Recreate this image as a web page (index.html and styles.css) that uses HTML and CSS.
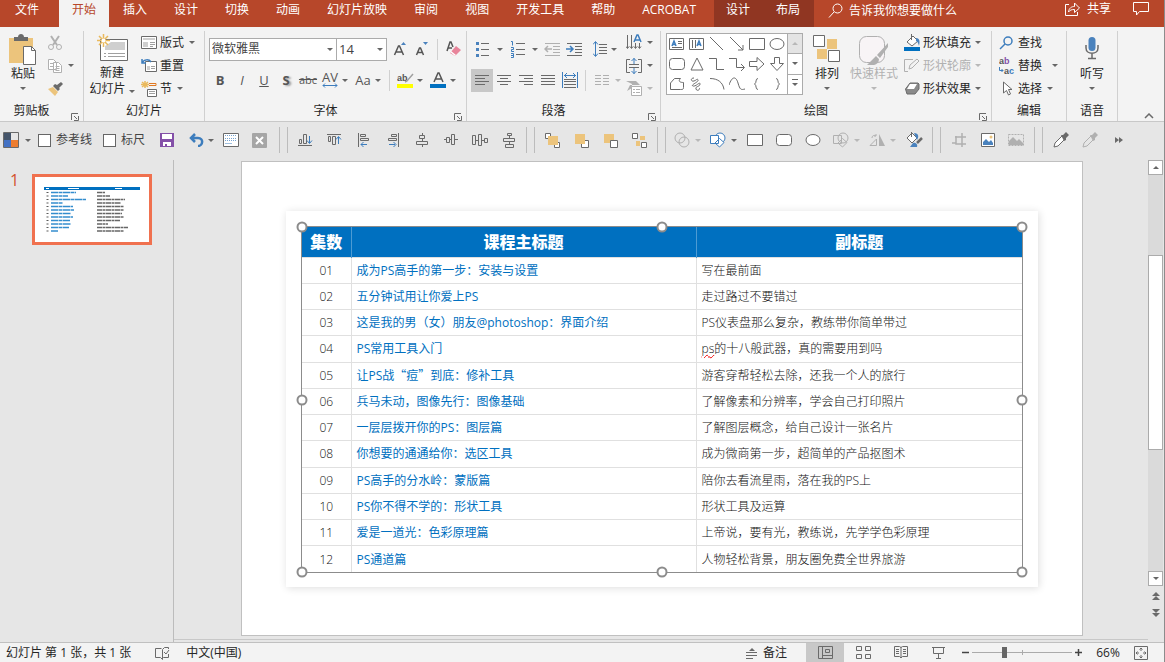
FILE: index.html
```html
<!DOCTYPE html>
<html lang="zh-CN">
<head>
  <meta charset="UTF-8" />
  <meta name="viewport" content="width=device-width, initial-scale=1.0" />
  <title>演示文稿</title>
  <link rel="stylesheet" href="styles.css">
</head>
<body>
  <header class="tabs">
    <button class="tab file">文件</button>
    <button class="tab active">开始</button>
    <button class="tab">插入</button>
    <button class="tab">设计</button>
    <button class="tab">切换</button>
    <button class="tab">动画</button>
    <button class="tab">幻灯片放映</button>
    <button class="tab">审阅</button>
    <button class="tab">视图</button>
    <button class="tab">开发工具</button>
    <button class="tab">帮助</button>
    <button class="tab">ACROBAT</button>
    <div class="context">
      <button class="tab">设计</button>
      <button class="tab">布局</button>
    </div>
    <button class="tell">
      <svg width="15" height="16"><circle cx="9.500" cy="5.500" r="4.500"/><path d="M6 9L1 14.500"/></svg>
      告诉我你想要做什么
    </button>
    <button class="share">
      <svg width="17" height="15"><path d="M5 3.500H1.500v11h12V11M4.500 11c.5-4 3-5.500 6-5.500V2l5 5-5 4.500V8.500c-3 0-4.500.5-6 2.500z"/></svg>
      共享
    </button>
    <button class="comment" aria-label="批注">
      <svg width="18" height="15"><path d="M1.500 1.500h15v9h-9l-3 3.500v-3.500h-3z"/></svg>
    </button>
  </header>

  <div class="ribbon">
    <section class="group">
      <div class="body">
        <button class="big paste">
          <svg width="30" height="32"><path class="gold" d="M1 4h24v25H1z"/><path class="dark" d="M6 3h4c0-4 6-4 6 0h4v4H6z"/><path class="white" d="M15.500 12.500h8l4 4v14h-12z"/><path d="M23.500 12.500v4h4"/></svg>
          <span>粘贴</span>
          <i class="caret"></i>
        </button>
        <div class="stack">
          <button class="small" aria-label="剪切"><svg width="16" height="16" class="pale"><path stroke-width="2" d="M4 1l6 9M12 1L6 10"/><circle cx="4" cy="12" r="2.500"/><circle cx="12" cy="12" r="2.500"/></svg></button>
          <button class="small" aria-label="复制"><svg width="16" height="16" class="pale"><path class="white" d="M1.500 1.500h5l3 3v7h-8zM6.500 4.500h5l3 3v7h-8z"/><path d="M3 5.500h3M3 8.500h3M8.500 8.500h4M8.500 10.500h4M8.500 12.500h4"/></svg><i class="caret"></i></button>
          <button class="small" aria-label="格式刷"><svg width="17" height="16"><path class="gold" d="M1 8l5-2 5 5-3 4z"/><path class="dark" d="M6 5l5 5 2-2-1-1 4-4-2-2-4 3-2-1z"/></svg></button>
        </div>
      </div>
      <h2>剪贴板</h2>
      <button class="launch" aria-label="剪贴板选项"><svg width="8" height="8"><path d="M.5 7V.5H7M3 3l3 3M7.500 3v4.500H3"/></svg></button>
    </section>

    <section class="group">
      <div class="body">
        <button class="big new">
          <svg width="31" height="30"><path class="white" d="M3.500 5.500h27v21h-27z"/><path class="light" d="M14 8h14v8H8v-4z"/><path class="soft" d="M7 19.500h2M11 19.500h17M7 22.500h2M11 22.500h17"/><path class="sun" d="M6.500 0v13M0 6.500h13M2 2l9 9M11 2l-9 9"/><circle cx="6.500" cy="6.500" r="2" class="white plain"/></svg>
          <span>新建</span>
          <span>幻灯片 <i class="caret"></i></span>
        </button>
        <div class="stack">
          <button class="small"><svg width="16" height="15"><path class="white" d="M.5 1.500h15v12H.5z"/><path class="light" d="M2 3h12v2H2zM2 7h5v5H2z"/><path class="soft" d="M9 7.500h5M9 9.500h5M9 11.500h3"/></svg>版式<i class="caret"></i></button>
          <button class="small"><svg width="16" height="15"><path class="white" d="M4.500 3.500h11v10h-11z"/><path class="light" d="M6 8h3v4H6z"/><path class="soft" d="M10 8.500h4M10 10.500h4"/><path class="blue thick" d="M1 1v4h4M1 5c2-4 7-4 9-1"/></svg>重置</button>
          <button class="small"><svg width="16" height="16"><path class="sun" d="M4 0v7M0 3.500h8M1 1l6 5M7 1L1 6"/><path class="orange" d="M8 4.500h7v-2H8"/><path class="white" d="M6.500 8.500h9v7h-9z"/><path class="soft" d="M8 10.500h6M8 12.500h6"/></svg>节<i class="caret"></i></button>
        </div>
      </div>
      <h2>幻灯片</h2>
    </section>

    <section class="group">
      <div class="lines">
        <div class="line">
          <label class="combo name"><select aria-label="字体"><option>微软雅黑</option></select><i class="caret"></i></label>
          <label class="combo size"><select aria-label="字号"><option>14</option></select><i class="caret"></i></label>
          <button class="key grow" aria-label="增大字号"><svg width="14" height="14"><path class="letter" d="M1.500 13L5.500 4h1l4 9M3 10h6"/><path class="bluefill" d="M8 3l2.500-3L13 3z"/></svg></button>
          <button class="key" aria-label="减小字号"><svg width="14" height="14"><path class="letter" d="M1.500 13L4.500 6h1l3 7M2.500 10.500h5"/><path class="bluefill" d="M8 0h5l-2.500 3z"/></svg></button>
          <span class="rule"></span>
          <button class="key" aria-label="清除格式"><svg width="17" height="17"><path class="letter" d="M2 10L5 1h1l2 5M3 7h4"/><path class="pink" d="M5 12l6-7 5 4-6 6z"/><path class="white plain" d="M6 10l5 4-1 1-5-4z"/></svg></button>
        </div>
        <div class="line text">
          <button class="key"><b>B</b></button>
          <button class="key"><em>I</em></button>
          <button class="key"><u>U</u></button>
          <button class="key"><b class="shade">S</b></button>
          <button class="key strike"><s>abc</s></button>
          <button class="key spacing" aria-label="字符间距"><span>AV</span><svg width="16" height="5"><path class="blue" d="M1 2.500h14M3 .5l-2 2 2 2M13 .5l2 2-2 2"/></svg></button><i class="caret"></i>
          <button class="key case">Aa</button><i class="caret"></i>
          <span class="rule"></span>
          <button class="key" aria-label="文本突出显示颜色"><svg width="17" height="18"><text x="0" y="10">ab</text><path class="soft thick" d="M16 3l-6 7-2 1"/><path class="yellow" d="M0 13h16v4H0z"/></svg></button><i class="caret"></i>
          <button class="key" aria-label="字体颜色"><svg width="17" height="18"><path class="letter" d="M4 11l4-9h1l4 9M5.500 8h6"/><path class="ink" d="M0 13h16v4H0z"/></svg></button><i class="caret"></i>
        </div>
      </div>
      <h2>字体</h2>
      <button class="launch" aria-label="字体选项"><svg width="8" height="8"><path d="M.5 7V.5H7M3 3l3 3M7.500 3v4.500H3"/></svg></button>
    </section>

    <section class="group">
      <div class="body">
        <div class="lines para">
          <div class="line">
            <button class="pair" aria-label="项目符号"><svg width="16" height="16"><path d="M6 2.500h8M6 8.500h8M6 14.500h8"/><path class="bluefill" d="M1 1h3v3H1zM1 7h3v3H1zM1 13h3v3H1z"/></svg><i class="caret"></i></button>
            <button class="pair" aria-label="编号"><svg width="16" height="18"><path d="M6 3.500h9M6 9.500h9M6 14.500h9"/><path class="blue" d="M1 1.500h1.500v4M1 7.500h2.500v2H1.500v2h2.500M1 13.500h2.500v4H1M1 15.500h2"/></svg><i class="caret"></i></button>
            <button class="key" aria-label="减少缩进"><svg width="17" height="14" class="pale"><path d="M1 1.500h15M9 4.500h7M9 7.500h7M9 10.500h7M1 13.500h15"/><path class="thick" d="M8 7H1M4 4L1 7l3 3"/></svg></button>
            <button class="key" aria-label="增加缩进"><svg width="17" height="14"><path d="M1 1.500h15M9 4.500h7M9 7.500h7M9 10.500h7M1 13.500h15"/><path class="blue thick" d="M0 7h7M4 4l3 3-3 3"/></svg></button>
            <button class="pair gapped" aria-label="行距"><svg width="15" height="16"><path d="M6 3.500h8M6 6.500h8M6 9.500h8M6 12.500h8"/><path class="blue" d="M2.500 1v14M0 3.500l2.500-3 2.500 3M0 12.500l2.500 3 2.500-3"/></svg><i class="caret"></i></button>
          </div>
          <div class="line">
            <button class="key on" aria-label="左对齐"><svg width="15" height="12"><path d="M0 1.500h14M0 4.500h10M0 7.500h14M0 10.500h10"/></svg></button>
            <button class="key" aria-label="居中"><svg width="15" height="12"><path d="M0 1.500h14M3 4.500h8M0 7.500h14M3 10.500h8"/></svg></button>
            <button class="key" aria-label="右对齐"><svg width="15" height="12"><path d="M0 1.500h14M5 4.500h9M0 7.500h14M5 10.500h9"/></svg></button>
            <button class="key" aria-label="两端对齐"><svg width="15" height="12"><path d="M0 1.500h14M0 4.500h14M0 7.500h14M0 10.500h14"/></svg></button>
            <button class="key" aria-label="分散对齐"><svg width="17" height="16"><path d="M2 7.500h12M2 9.500h12M2 12.500h12M2 15.500h12"/><path class="blue" d="M.5 0v16M15.500 0v16M2 3.500h12M5 1L2.500 3.500 5 6M11 1l2.500 2.500L11 6"/></svg></button>
            <span class="rule"></span>
            <button class="pair" aria-label="分栏"><svg width="14" height="12" class="pale"><path d="M0 1.500h6M0 4.500h6M0 7.500h6M0 10.500h6M8 1.500h6M8 4.500h6M8 7.500h6M8 10.500h6"/></svg><i class="caret off"></i></button>
          </div>
        </div>
        <div class="stack">
          <button class="small" aria-label="文字方向"><svg width="16" height="17"><path d="M1.500 1v13M5.500 1v13M9.500 9v5M13.500 9v5M0 12.500l1.500 2 1.500-2M4 12.500l1.500 2 1.500-2M8 12.500l1.500 2 1.500-2M12 12.500l1.500 2 1.500-2"/><path class="blue thick" d="M8 8l3-7h1l3 7M9 6h5"/></svg><i class="caret"></i></button>
          <button class="small" aria-label="对齐文本"><svg width="16" height="16"><path d="M4 1.500H.5v13H4M12 1.500h3.500v13H12M3 6.500h10M3 9.500h10"/><path class="blue" d="M8 0v6M8 10v6M5.500 3L8 .5 10.500 3M5.500 13L8 15.500l2.500-2.500"/></svg><i class="caret"></i></button>
          <button class="small" aria-label="转换为 SmartArt"><svg width="16" height="17" class="pale"><path class="greyfill" d="M0 1h10l4 4H4zM0 1l4 4-3 6 5-3V4z"/><path class="white" d="M5.500 6.500h10v9h-10z"/><path d="M7 9.500h2M10 9.500h4M7 12.500h2M10 12.500h4"/></svg><i class="caret off"></i></button>
        </div>
      </div>
      <h2>段落</h2>
      <button class="launch" aria-label="段落选项"><svg width="8" height="8"><path d="M.5 7V.5H7M3 3l3 3M7.500 3v4.500H3"/></svg></button>
    </section>

    <section class="group">
      <div class="body draw">
        <div class="gallery">
          <div class="shapes">
            <button aria-label="文本框"><svg width="16" height="14"><path d="M.5 1.500h14v11H.5zM9 4.500h4M9 6.500h4M3 10.500h10"/><path class="blue thick" d="M3 9l2-5 2 5M4 7.500h3"/></svg></button>
            <button aria-label="竖排文本框"><svg width="16" height="14"><path d="M.5 1.500h14v11H.5zM3.500 3v8M6.500 3v8"/><path class="blue thick" d="M8 9l2-5 2 5M9 7.500h3"/></svg></button>
            <button aria-label="直线"><svg width="16" height="14"><path d="M1 0l13 13"/></svg></button>
            <button aria-label="箭头"><svg width="16" height="14"><path d="M1 0l13 13M14 8v5H9"/></svg></button>
            <button aria-label="矩形"><svg width="16" height="14"><path d="M.5 1.500h15v11H.5z"/></svg></button>
            <button aria-label="椭圆"><svg width="16" height="14"><ellipse cx="8" cy="7" rx="7" ry="5.500"/></svg></button>
            <button aria-label="圆角矩形"><svg width="16" height="14"><rect x=".5" y="1.500" width="15" height="11" rx="3"/></svg></button>
            <button aria-label="三角形"><svg width="16" height="14"><path d="M8 1l6 12H2z"/></svg></button>
            <button aria-label="肘形连接符"><svg width="16" height="14"><path d="M0 1.500h7.500v11H15"/></svg></button>
            <button aria-label="肘形箭头"><svg width="16" height="14"><path d="M0 1.500h7.500v9H15M12 7l3.500 3.500L12 14"/></svg></button>
            <button aria-label="右箭头"><svg width="16" height="14"><path d="M.5 4.500H8V.5L15 7l-7 6.500v-4H.5z"/></svg></button>
            <button aria-label="下箭头"><svg width="16" height="14"><path d="M5.500.5v6h-4L8 13.500l6.500-7h-4v-6z"/></svg></button>
            <button aria-label="任意多边形"><svg width="16" height="14"><path d="M1.500 12.500V6l4-4.500h6c-3 3 0 4 3 4v5c0 2-1 2-3 2z"/></svg></button>
            <button aria-label="自由曲线"><svg width="16" height="14"><path d="M5 1C1 1 2 5 5 4s3-3 4-1-8 5-5 6 7-5 7-2-5 2-4 5 5 0 3-1"/></svg></button>
            <button aria-label="弧形"><svg width="16" height="14"><path d="M1 1.500c8 0 13 4 14 11"/></svg></button>
            <button aria-label="曲线"><svg width="16" height="14"><path d="M0 8c3-9 7-9 9-2s3 7 7 6"/></svg></button>
            <button aria-label="左大括号"><svg width="16" height="14"><path d="M9 1.500C6 1.500 8 6 5.500 7 8 8 6 12.500 9 12.500"/></svg></button>
            <button aria-label="右大括号"><svg width="16" height="14"><path d="M7 1.500c3 0 1 4.500 3.500 5.500C8 8 10 12.500 7 12.500"/></svg></button>
          </div>
          <div class="steps">
            <button class="dim" aria-label="上一行"><i class="caret up off"></i></button>
            <button aria-label="下一行"><i class="caret"></i></button>
            <button aria-label="其他"><i class="caret more"></i></button>
          </div>
        </div>
        <button class="big arrange">
          <svg width="28" height="28"><path class="gold" d="M14 4h10v10H14zM4 14h10v10H4z"/><path class="white" d="M.5.5h11v11H.5zM15.500 15.500h11v11h-11z"/></svg>
          <span>排列</span>
          <i class="caret"></i>
        </button>
        <button class="big style" disabled>
          <svg width="32" height="30" class="pale"><rect fill="#f8f4f6" x="1.500" y="1.500" width="25" height="26" rx="7"/><path class="greyfill" d="M30 8L19 20l3 3 8-11zM18 21l-9 9c6 1 12 0 12-6z"/></svg>
          <span>快速样式</span>
          <i class="caret off"></i>
        </button>
        <div class="stack">
          <button class="small"><svg width="16" height="17"><path class="white" d="M3 8l6-6 5 5-6 5z"/><path d="M7.500 0v6"/><path class="bluefill" d="M12 4c4 0 4 4 3 8-1-3-1-4-3-5z"/><path class="ink" d="M0 13h16v4H0z"/></svg>形状填充<i class="caret"></i></button>
          <button class="small" disabled><svg width="16" height="15" class="pale"><path d="M9 1.500H.5v12H4M5 11l1-4 7-6 2 2-7 7z"/></svg>形状轮廓<i class="caret off"></i></button>
          <button class="small"><svg width="16" height="15"><path stroke-linejoin="round" d="M1.500 8L6 2h8l1 1v5l-4 5H3z" fill="#8a8a8a"/><path class="white plain" d="M6 3h7l-3 5H3z"/></svg>形状效果<i class="caret"></i></button>
        </div>
      </div>
      <h2>绘图</h2>
      <button class="launch" aria-label="绘图选项"><svg width="8" height="8"><path d="M.5 7V.5H7M3 3l3 3M7.500 3v4.500H3"/></svg></button>
    </section>

    <section class="group">
      <div class="body edit">
        <div class="stack">
          <button class="small"><svg width="16" height="14"><circle class="blue thick" cx="9" cy="5" r="4"/><path class="blue thick" d="M6 8l-5 5"/></svg>查找</button>
          <button class="small"><svg width="16" height="22"><text x="0" y="9">a<tspan class="violet">b</tspan></text><text x="5" y="19">a<tspan class="azure">c</tspan></text><path class="blue" d="M.5 12v3.500H4M2.500 14L4 15.500 2.500 17"/></svg>替换<i class="caret far"></i></button>
          <button class="small"><svg width="16" height="15"><path class="white" d="M4.500 1v11l3-2.500 2 4.500 2-1-2-4.500h3.500z"/></svg>选择<i class="caret"></i></button>
        </div>
      </div>
      <h2>编辑</h2>
    </section>

    <section class="group">
      <div class="body voice">
        <button class="big">
          <svg width="14" height="24"><rect class="bluefill" x="3.500" y="1" width="7" height="14" rx="3.500"/><path class="thick" d="M1 9v3c0 7 12 7 12 0V9M7 17v5M3 22.500h8"/></svg>
          <span>听写</span>
          <i class="caret"></i>
        </button>
      </div>
      <h2>语音</h2>
    </section>
    <button class="collapse" aria-label="折叠功能区"><svg width="10" height="6"><path class="thick" d="M1 5l4-4 4 4"/></svg></button>
  </div>

  <nav class="quick">
    <button class="swatch" aria-label="主题颜色"><svg width="16" height="16"><path fill="#44546a" stroke="none" d="M1 1h7v7H1z"/><path fill="#e7e6e6" stroke="none" d="M8 1h7v7H8z"/><path fill="#4472c4" stroke="none" d="M1 8h7v7H1z"/><path fill="#ed7d31" stroke="none" d="M8 8h7v7H8z"/><path d="M.5.5h15v15H.5z"/></svg><i class="caret"></i></button>
    <label><input type="checkbox">参考线</label>
    <label><input type="checkbox">标尺</label>
    <div class="starter">
      <button aria-label="保存"><svg width="14" height="14"><path fill="#8450a8" stroke="none" d="M0 0h14v14H0z"/><path fill="#fff" stroke="none" d="M2 1h10v5H2zM3 9h8v4H3z"/><path fill="#8450a8" stroke="none" d="M5 11h2v2H5z"/></svg></button>
      <button class="undo" aria-label="撤消"><svg width="15" height="14"><path class="blue bold" d="M6 1L2 5l4 4M2 5h7c6 0 5 8 0 8"/></svg><i class="caret"></i></button>
      <button aria-label="网格"><svg width="16" height="14"><path class="white" d="M.5.5h15v13H.5z"/><path class="blue" stroke-dasharray="1 1" stroke-opacity=".7" d="M2 2.500h12M2 5.500h12M2 7.500h12"/><path class="blue" stroke-opacity=".5" d="M2 10.500h7"/></svg></button>
      <button aria-label="关闭"><svg width="15" height="15"><rect fill="#a6a6a6" stroke="none" width="15" height="15" rx="1"/><path stroke="#fff" stroke-width="2" d="M4 4l7 7M11 4l-7 7"/></svg></button>
    </div>
    <span class="double"></span>
    <div class="tools">
      <button aria-label="底端对齐"><svg width="15" height="14"><path d="M0 12.500h14M1.500 6.500h2v4h-2zM5.500 1.500h3v9h-3z"/><path class="blue" d="M11.500 3v7M9 7.500l2.500 3 2.500-3"/></svg></button>
      <button aria-label="顶端对齐"><svg width="15" height="14"><path d="M0 1.500h14M1.500 3.500h2v5h-2zM5.500 3.500h3v8h-3z"/><path class="blue" d="M11.500 11V4M9 6.500l2.500-3 2.500 3"/></svg></button>
      <button aria-label="左对齐对象"><svg width="12" height="14"><path d="M.5 0v14M2.500 1.500h5v2h-5zM2.500 5.500h8v2h-8z"/><path class="blue" d="M9 11.500H3M5.500 9L3 11.500 5.500 14"/></svg></button>
      <button aria-label="右对齐对象"><svg width="12" height="14"><path d="M11.500 0v14M4.500 1.500h5v2h-5zM1.500 5.500h8v2h-8z"/><path class="blue" d="M2 11.500h6M6.500 9L9 11.500 6.500 14"/></svg></button>
      <button aria-label="水平居中"><svg width="12" height="14"><path d="M6.500 0v2M6.500 5v3M6.500 12v2M3.500 2.500h5v3h-5zM.5 8.500h11v3H.5z"/></svg></button>
      <button aria-label="垂直居中"><svg width="14" height="14"><path d="M0 6.500h2M5 6.500h2M11 6.500h3M2.500 4.500h3v5h-3zM7.500 1.500h3v10h-3z"/></svg></button>
      <button aria-label="横向分布"><svg width="16" height="14"><path d="M.5 2.500h3v9h-3zM6.500 1.500h3v11h-3zM12.500 5.500h3v4h-3zM4 7.500h2M10 7.500h2"/></svg></button>
      <button aria-label="纵向分布"><svg width="12" height="16"><path d="M4.500 1.500h4v2h-4zM.5 6.500h11v3H.5zM2.500 12.500h8v3h-8zM6.500 4v2M6.500 10v2"/></svg></button>
    </div>
    <span class="double"></span>
    <div class="tools">
      <button aria-label="上移一层"><svg width="16" height="15"><path class="white" d="M.5.5h5v5h-5zM9.500 9.500h5v5h-5z"/><path class="gold" d="M3 3h10v9H3z"/></svg></button>
      <button aria-label="置于顶层"><svg width="16" height="15"><path class="white" d="M7.500 7.500h7v7h-7z"/><path class="gold" d="M1 1h10v10H1z"/></svg></button>
      <button aria-label="下移一层"><svg width="16" height="15"><path class="gold" d="M1 1h10v9H1z"/><path class="white" d="M7.500 7.500h7v7h-7z"/></svg></button>
      <button aria-label="置于底层"><svg width="16" height="15"><path class="gold" d="M8 3h5v4H8zM4 8h4v5H4z"/><path class="white" d="M.5.5h5v5h-5zM9.500 9.500h5v5h-5z"/></svg></button>
    </div>
    <span class="double"></span>
    <div class="tools">
      <button class="wide" aria-label="合并形状"><svg width="17" height="16" class="pale"><circle cx="6" cy="6" r="5"/><circle cx="10" cy="10" r="5"/></svg><i class="caret off"></i></button>
      <button class="wide" aria-label="插入形状"><svg width="17" height="16"><circle class="blue white" cx="10" cy="6" r="5"/><path class="blue white" d="M.5 3.500h8v8h-8zM9.500 6.500l4.500 4-4.500 4.500L5 11z"/></svg><i class="caret"></i></button>
      <button aria-label="矩形"><svg width="17" height="14"><path class="white" d="M.5 1.500h15v11H.5z"/></svg></button>
      <button aria-label="圆角矩形"><svg width="17" height="14"><rect class="white" x=".5" y="1.500" width="15" height="11" rx="3"/></svg></button>
      <button aria-label="椭圆"><svg width="17" height="14"><ellipse class="white" cx="8" cy="7" rx="7" ry="5.500"/></svg></button>
      <button class="wide" aria-label="编辑形状"><svg width="17" height="16" class="pale"><circle cx="10" cy="6" r="5"/><path d="M.5 3.500h8v8h-8zM9.500 6.500l4.500 4-4.500 4.500L5 11z"/></svg><i class="caret off"></i></button>
      <button class="wide" aria-label="旋转"><svg width="17" height="14" class="pale"><path d="M7.500 6v6.500H1zM3 5c0-3 3-3 4-2M7 1v2H5"/><path class="greyfill" d="M10 1l6 12h-6z"/></svg><i class="caret off"></i></button>
      <button aria-label="格式刷"><svg width="17" height="16"><path class="white" d="M1 6l5-5 5 5-5 5z"/><path d="M5.500 0v5"/><path class="bluefill" d="M8 1c5 0 5 4 3 7zM4 15l3-4c3-1 5 2 4 4z"/><path class="bold" d="M16 6l-5 5"/></svg></button>
    </div>
    <span class="double"></span>
    <div class="tools">
      <button aria-label="裁剪"><svg width="14" height="14" class="pale"><path class="thick" d="M4 3v8h10M0 10h4M10 14V4H3M10 0v4h4"/></svg></button>
      <button aria-label="图片"><svg width="14" height="14"><path class="white" d="M.5.5h13v13H.5z"/><path class="bluefill" d="M2 12V9l3-3 3 3 2-2 2 3v2z"/><circle class="gold" cx="10" cy="4" r="1.500"/></svg></button>
      <button aria-label="删除背景"><svg width="17" height="14" class="pale"><path stroke-dasharray="2 1" d="M.5 1.500h15v11H.5z"/><path class="greyfill" d="M1 12V8l4-4 4 4 2-2 4 4v2z"/></svg></button>
    </div>
    <span class="double"></span>
    <div class="tools">
      <button aria-label="取色器"><svg width="16" height="16"><path class="white" d="M1 15l1-4 7-7 3 3-7 7z"/><path class="dark" d="M8 3l2 0 3-3 3 3-3 3v2l-2 1z"/></svg></button>
      <button aria-label="轮廓取色器"><svg width="16" height="16" class="pale"><path d="M1 15l1-4 7-7 3 3-7 7z"/><path class="greyfill" d="M8 3l2 0 3-3 3 3-3 3v2l-2 1z"/></svg></button>
      <button aria-label="更多"><svg width="8" height="6"><path class="dark" d="M0 0l4 3-4 3zM4 0l4 3-4 3z"/></svg></button>
    </div>
  </nav>

  <main>
    <aside class="thumbs">
      <span class="num">1</span>
      <button class="thumb" aria-label="幻灯片 1">
        <svg viewBox="0 0 114 65">
          <path class="ink" d="M9 10h96v3H9z"/>
          <path stroke="#fff" d="M11 11.500h3M33 11.500h11M80 11.500h7"/>
          <path stroke="#333" stroke-opacity=".8" stroke-width="2" stroke-dasharray="1 2.500" d="M12.500 15v40"/>
          <path stroke="#333" stroke-opacity=".75" stroke-width="1.500" stroke-dasharray="5 .5 3 .5" d="M62 15.500h8M62 19h13M62 22.500h28M62 26h24M62 29.500h27M62 33h27M62 36.500h25M62 40h27M62 43.500h23M62 47h11M62 50.500h31M62 54h27"/>
          <path stroke="#0070c0" stroke-width="1.700" stroke-opacity=".8" stroke-dasharray="7 .5 4 .5" d="M16 15.500h25M16 19h17M16 22.500h35M16 26h12M16 29.500h22M16 33h23M16 36.500h20M16 40h22M16 43.500h19M16 47h20M16 50.500h18M16 54h7"/>
        </svg>
      </button>
    </aside>
    <div class="stage">
      <div class="slide">
        <div class="card">
          <div class="frame">
            <table>
              <thead>
                <tr><th class="no">集数</th><th class="title">课程主标题</th><th>副标题</th></tr>
              </thead>
              <tbody>
                <tr><td>01</td><td>成为PS高手的第一步：安装与设置</td><td>写在最前面</td></tr>
                <tr><td>02</td><td>五分钟试用让你爱上PS</td><td>走过路过不要错过</td></tr>
                <tr><td>03</td><td>这是我的男（女）朋友@photoshop：界面介绍</td><td>PS仪表盘那么复杂，教练带你简单带过</td></tr>
                <tr><td>04</td><td>PS常用工具入门</td><td><span class="typo">ps</span>的十八般武器，真的需要用到吗</td></tr>
                <tr><td>05</td><td>让PS战<span class="zh">“痘”</span>到底：修补工具</td><td>游客穿帮轻松去除，还我一个人的旅行</td></tr>
                <tr><td>06</td><td>兵马未动，图像先行：图像基础</td><td>了解像素和分辨率，学会自己打印照片</td></tr>
                <tr><td>07</td><td>一层层拨开你的PS：图层篇</td><td>了解图层概念，给自己设计一张名片</td></tr>
                <tr><td>08</td><td>你想要的通通给你：选区工具</td><td>成为微商第一步，超简单的产品抠图术</td></tr>
                <tr><td>09</td><td>PS高手的分水岭：蒙版篇</td><td>陪你去看流星雨，落在我的PS上</td></tr>
                <tr><td>10</td><td>PS你不得不学的：形状工具</td><td>形状工具及运算</td></tr>
                <tr><td>11</td><td>爱是一道光：色彩原理篇</td><td>上帝说，要有光，教练说，先学学色彩原理</td></tr>
                <tr><td>12</td><td>PS通道篇</td><td>人物轻松背景，朋友圈免费全世界旅游</td></tr>
              </tbody>
            </table>
            <i class="handle nw"></i><i class="handle n"></i><i class="handle ne"></i>
            <i class="handle w"></i><i class="handle e"></i>
            <i class="handle sw"></i><i class="handle s"></i><i class="handle se"></i>
          </div>
        </div>
      </div>
    </div>
    <div class="scroll">
      <button aria-label="向上滚动"><i class="caret up"></i></button>
      <div class="track"><div class="grip"></div></div>
      <button aria-label="向下滚动"><i class="caret"></i></button>
      <button class="jump" aria-label="上一张幻灯片"><svg width="8" height="8"><path class="dark" d="M0 4l4-4 4 4zM0 8l4-4 4 4z"/></svg></button>
      <button class="jump" aria-label="下一张幻灯片"><svg width="8" height="8"><path class="dark" d="M0 0h8L4 4zM0 4h8L4 8z"/></svg></button>
    </div>
  </main>

  <footer class="status">
    <span class="page">幻灯片 第 1 张，共 1 张</span>
    <button class="proof" aria-label="拼写检查"><svg width="15" height="14"><path d="M6.500 2.500H.5v9h5l2 2V3.500l2-2h4V3M13.500 8v3.500h-5L7 13M9 6l2 2 3-4"/></svg></button>
    <button class="lang">中文(中国)</button>
    <button class="notes"><svg width="12" height="12"><path class="dark" d="M3 4l3-3 3 3z"/><path d="M0 5.500h11M0 8.500h11M0 11.500h7"/></svg>备注</button>
    <button class="view on" aria-label="普通视图"><svg width="15" height="13"><path d="M.5.5h14v12H.5zM4.500 1v11M5 9.500h9M7.500 3.500h4v3h-4z"/></svg></button>
    <button class="view" aria-label="幻灯片浏览"><svg width="15" height="13"><path d="M.5.5h5v4h-5zM9.500.5h5v4h-5zM.5 8.500h5v4h-5zM9.500 8.500h5v4h-5z"/></svg></button>
    <button class="view" aria-label="阅读视图"><svg width="14" height="13"><path d="M.5.5h5l1.500 1 1.500-1h5v10h-5L7 12l-1.500-1.500h-5zM7 1v11M2 3.500h3M2 5.500h3M2 7.500h3M9 3.500h3M9 5.500h3M9 7.500h3"/></svg></button>
    <button class="view" aria-label="幻灯片放映"><svg width="14" height="13"><path d="M0 1.500h13M1.500 2v5.500h10V2M6.500 8v4M4 12.500h5"/></svg></button>
    <button class="zoom" aria-label="缩小"><svg width="7" height="7"><path class="thick" d="M0 3.500h7"/></svg></button>
    <input type="range" aria-label="缩放" min="0" max="100" value="32">
    <button class="zoom" aria-label="放大"><svg width="7" height="7"><path class="thick" d="M0 3.500h7M3.500 0v7"/></svg></button>
    <button class="percent">66%</button>
    <button class="fit" aria-label="适应窗口"><svg width="14" height="14"><path d="M.5.500h13v13H.5zM7 2v3M7 9v3M2 7h3M9 7h3M5.500 3.500L7 2l1.500 1.500M5.500 10.500L7 12l1.500-1.500M3.500 5.500L2 7l1.500 1.500M10.500 5.500L12 7l-1.500 1.500"/></svg></button>
  </footer>
</body>
</html>
```

FILE: styles.css
```css
* {
  box-sizing: border-box;
}
body {
  display: flex;
  flex-direction: column;
  height: 100vh;
  margin: 0;
  overflow: hidden;
  background: #e6e6e6;
  border-right: 1px solid #8c8c8c;
  color: #262626;
  font: 12px/16px "Open Sans", "Noto Sans CJK SC", sans-serif;
}
button {
  display: flex;
  align-items: center;
  justify-content: center;
  flex: none;
  padding: 0;
  border: none;
  background: none;
  color: inherit;
  font: inherit;
  white-space: nowrap;
}
button:disabled {
  color: #b1b1b1;
}

/* icons */
svg {
  flex: none;
  fill: none;
  stroke: #6a6a6a;
}
svg text {
  fill: #555;
  stroke: none;
  font: bold 9px "Liberation Sans", sans-serif;
}
.pale {
  stroke: #b0b0b0;
}
.white {
  fill: #fff;
}
.plain {
  stroke: none;
}
.gold {
  fill: #ecc47c;
  stroke: none;
}
.dark {
  fill: #6a6a6a;
  stroke: none;
}
.light {
  fill: #cfcfcf;
  stroke: none;
}
.soft {
  stroke: #a0a0a0;
}
.greyfill {
  fill: #b0b0b0;
  stroke: none;
}
.blue {
  stroke: #3d7dbd;
}
.bluefill {
  fill: #4a82bd;
  stroke: none;
}
.ink {
  fill: #0070c0;
  stroke: none;
}
.yellow {
  fill: #ff0;
  stroke: none;
}
.pink {
  fill: #e8849a;
  stroke: none;
}
.orange {
  stroke: #e07820;
}
.sun {
  stroke: #e9b95c;
  stroke-width: 1.5;
}
.letter {
  stroke: #555;
  stroke-width: 1.5;
}
.thick {
  stroke-width: 1.5;
}
.bold {
  stroke-width: 2.5;
}
.violet {
  fill: #8450a8;
}
.azure {
  fill: #3d7dbd;
}
.caret {
  flex: none;
  display: inline-block;
  border: 3px solid transparent;
  border-top-color: #666;
  border-bottom: none;
}
.caret.up {
  border-top: none;
  border-bottom: 3px solid #666;
}
.caret.off {
  border-top-color: #b8b8b8;
  border-bottom-color: #b8b8b8;
}

/* tabs */
.tabs {
  display: flex;
  flex: none;
  height: 27px;
  background: #b7472a;
  color: #fff;
}
.tab {
  align-items: flex-start;
  padding: 2px 13px 0;
  margin-right: 1px;
}
.tab.file {
  padding: 2px 19px 0 15px;
}
.tab.active {
  background: #f3f3f3;
  color: #b7472a;
}
.context {
  display: flex;
  margin-left: 4px;
  background: #903622;
}
.context .tab {
  padding: 2px 13px 0 12px;
}
.tabs svg {
  stroke: #fff;
}
.tell, .share {
  align-items: flex-start;
  gap: 6px;
  padding-top: 3px;
}
.tell {
  margin-left: 14px;
}
.share {
  padding-top: 1px;
  margin-left: auto;
}
.comment {
  align-items: flex-start;
  margin: 1px 14px 0 21px;
}

/* ribbon */
.ribbon {
  display: grid;
  grid-template-columns: 84px 121px 262px 194px 331px 75px 51px 1fr;
  flex: none;
  height: 95px;
  padding: 4px 0;
  background: #f3f3f3;
  border-bottom: 1px solid #c8c8c8;
}
.group {
  position: relative;
  border-right: 1px solid #d0d0d0;
}
.group h2 {
  margin: 0;
  font-size: 12px;
  font-weight: 400;
  line-height: 21px;
  text-align: center;
  padding-right: 20px;
}
.group h2:last-child {
  padding-right: 0;
}
.launch {
  position: absolute;
  right: 4px;
  bottom: 0;
  height: 8px;
}
.body {
  display: flex;
  height: 69px;
}
.stack {
  display: flex;
  flex-direction: column;
}
.small {
  justify-content: flex-start;
  gap: 3px;
  height: 23px;
}
.small .caret {
  margin-left: 2px;
}
.small .caret.far {
  margin-left: 7px;
}
.big {
  flex-direction: column;
  justify-content: flex-start;
  padding-top: 3px;
}
.big > .caret {
  margin-top: 5px;
}
.paste {
  width: 30px;
  margin: 0 9px 0 8px;
}
.new {
  width: 48px;
  margin: 0 5px 0 4px;
}
.new svg {
  margin-bottom: 1px;
}
.lines {
  height: 69px;
  padding: 7px 0 0 4px;
}
.line {
  display: flex;
  align-items: center;
  height: 22px;
  margin-bottom: 9px;
}
.combo {
  position: relative;
  display: flex;
  align-items: center;
  flex: none;
  height: 23px;
}
.combo .caret {
  position: absolute;
  right: 4px;
}
.combo select {
  width: 100%;
  height: 100%;
  padding: 0 2px;
  appearance: none;
  border: 1px solid #ababab;
  border-radius: 0;
  background: #fff;
  color: #444;
  font: inherit;
}
.combo.name {
  width: 128px;
}
.combo.size {
  width: 50px;
}
.size select {
  border-left: none;
  font-size: 13px;
}
.key {
  width: 22px;
  height: 23px;
  color: #555;
}
.key.grow {
  margin-left: 2px;
}
.key.on {
  background: #c8c8c8;
}
.rule {
  width: 1px;
  height: 21px;
  margin: 0 4px;
  background: #d0d0d0;
}
.text .key {
  font-size: 13px;
}
.shade {
  text-shadow: 2px 1px 2px #999;
}
.text .strike {
  font-size: 11px;
}
.text .spacing {
  flex-direction: column;
  line-height: 11px;
}
.text .caret {
  margin: 0 4px 0 1px;
}
.para {
  flex: none;
  width: 159px;
}
.pair {
  gap: 6px;
  width: 35px;
}
.gapped {
  gap: 3px;
  width: 30px;
  margin-left: 5px;
}
.draw {
  padding: 2px 0 0 5px;
}
.gallery {
  display: flex;
  width: 137px;
  height: 62px;
  border: 1px solid #ababab;
  background: #fff;
}
.shapes {
  display: grid;
  grid-template-columns: repeat(6, 20px);
  flex: 1;
}
.steps {
  display: grid;
  width: 15px;
  border-left: 1px solid #ababab;
}
.steps button + button {
  border-top: 1px solid #ababab;
}
.steps .dim {
  background: #e4e4e4;
}
.more {
  position: relative;
}
.more::before {
  content: "";
  position: absolute;
  left: -3px;
  top: -7px;
  width: 6px;
  height: 1px;
  background: #666;
}
.draw .big {
  padding-top: 2px;
}
.draw .big svg {
  margin-bottom: 3px;
}
.arrange {
  width: 28px;
  margin: 0 9px 0 10px;
}
.draw .style svg {
  margin-bottom: 1px;
}
.draw .stack {
  margin: -2px 0 0 6px;
}
.draw .stack .caret {
  margin-left: 1px;
}
.edit {
  padding-left: 7px;
}
.voice {
  justify-content: center;
}
.voice svg {
  margin: 2px 0 6px;
}
.collapse {
  align-self: end;
  justify-self: end;
  margin: 0 10px 2px 0;
  height: 6px;
}

/* quick access toolbar */
.quick {
  display: flex;
  align-items: center;
  flex: none;
  height: 36px;
  padding-left: 3px;
  color: #444;
}
.quick label {
  display: flex;
  align-items: center;
  gap: 5px;
  margin-right: 11px;
}
.quick input {
  width: 13px;
  height: 13px;
  margin: 0;
  appearance: none;
  border: 1px solid #666;
  background: #fff;
}
.swatch {
  gap: 6px;
  margin-right: 7px;
}
.starter {
  display: flex;
  gap: 9px;
  margin: 0 9px 0 4px;
}
.starter button:last-child {
  margin-left: 4px;
}
.undo {
  gap: 4px;
  margin-left: 6px;
}
.double {
  flex: none;
  width: 9px;
  height: 26px;
  margin: 0 3px;
  border: 1px solid #bcbcbc;
  border-width: 0 1px;
}
.tools {
  display: flex;
}
.tools button {
  width: 29px;
}
.tools .wide {
  gap: 4px;
  width: 36px;
}

/* slide area */
main {
  display: flex;
  flex: 1;
  min-height: 0;
}
.thumbs {
  display: flex;
  align-items: flex-start;
  width: 174px;
  margin-top: 2px;
  border-right: 1px solid #bcbcbc;
}
.num {
  width: 32px;
  padding: 12px 0 0 10px;
  color: #d35230;
  font-size: 16px;
}
.thumb {
  width: 120px;
  margin-top: 14px;
  border: 3px solid #f0714f;
  background: #fff;
}
.thumb svg {
  width: 100%;
}
.stage {
  flex: 1;
  min-width: 0;
  padding: 3px 65px 0 67px;
  border-bottom: 1px solid #c8c8c8;
  margin-bottom: 2px;
}
.slide {
  aspect-ratio: 842 / 475;
  padding: 49px 44px 48px;
  border: 1px solid #c0c0c0;
  background: #fff;
}
.card {
  padding: 15px 15px 14px;
  background: #fff;
  box-shadow: 1px 1px 8px #ddd;
}
.frame {
  position: relative;
  border: 1px solid #8c8c8c;
}
table {
  width: 100%;
  height: 345px;
  table-layout: fixed;
  border-collapse: collapse;
}
th {
  height: 30px;
  padding: 0;
  background: #0070c0;
  color: #fff;
  font-size: 16px;
  font-weight: 900;
}
th + th {
  border-left: 1px solid #4d9bd3;
}
.no {
  width: 49px;
}
.title {
  width: 345px;
}
td {
  height: 26px;
  padding: 1px 5px 0;
  border-top: 1px solid #e0e0e0;
  color: #111;
  font-weight: 300;
}
td + td {
  border-left: 1px solid #e0e0e0;
}
td:first-child {
  padding: 1px 0 0;
  text-align: center;
}
td:nth-child(2) {
  color: #0070c0;
  font-weight: 400;
}
.zh {
  font-family: "Noto Sans CJK SC", sans-serif;
}
.typo {
  text-decoration: underline wavy #e00 1px;
}
.handle {
  position: absolute;
  width: 11px;
  height: 11px;
  border: 2px solid #8c8c8c;
  border-radius: 50%;
  background: #fff;
  transform: translate(-50%, -50%);
}
.nw, .w, .sw {
  left: 0;
}
.n, .s {
  left: 50%;
}
.ne, .e, .se {
  left: 100%;
}
.nw, .n, .ne {
  top: 0;
}
.w, .e {
  top: 50%;
}
.sw, .s, .se {
  top: 100%;
}
.scroll {
  display: flex;
  flex-direction: column;
  width: 16px;
  padding: 2px 1px 22px 0;
}
.scroll button {
  height: 15px;
  border: 1px solid #ababab;
  background: #fff;
}
.track {
  flex: 1;
  padding-top: 80px;
  background: #dadada;
}
.grip {
  height: 195px;
  border: 1px solid #ababab;
  background: #fff;
}
.scroll .jump {
  margin-top: 2px;
  border: none;
  background: none;
}

/* status bar */
.status {
  display: flex;
  align-items: center;
  flex: none;
  height: 20px;
  padding-left: 6px;
  background: #f3f3f3;
  border-top: 1px solid #c0c0c0;
}
.proof {
  margin: 0 16px 0 24px;
}
.notes {
  gap: 5px;
  margin: 0 19px 0 auto;
}
.view {
  width: 38px;
  height: 19px;
}
.view.on {
  background: #c8c8c8;
}
.zoom {
  margin: 0 3px;
}
.zoom svg {
  stroke: #444;
}
.view + .zoom {
  margin-left: 4px;
}
input[type="range"] {
  width: 100px;
  height: 12px;
  margin: 0;
  appearance: none;
  background: linear-gradient(#ababab, #ababab) center / 100% 1px no-repeat, linear-gradient(#ababab, #ababab) center / 1px 5px no-repeat;
}
input[type="range"]::-webkit-slider-thumb {
  appearance: none;
  width: 5px;
  height: 11px;
  background: #666;
}
.percent {
  width: 46px;
}
.fit {
  margin: 0 16px 0 3px;
}
```
